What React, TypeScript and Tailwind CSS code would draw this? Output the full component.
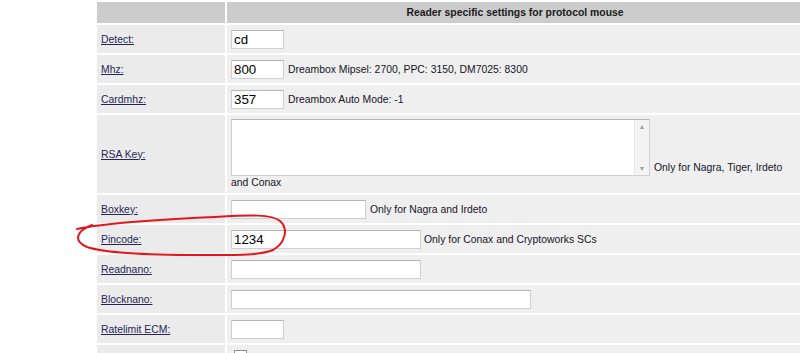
import React from 'react';

// Reader settings form (protocol mouse) with a hand-drawn red mark round Pincode

type RowProps = { label: string; children?: React.ReactNode; tall?: boolean };

function Row({ label, children, tall }: RowProps) {
  return (
    <tr className={tall ? 'h-[78px]' : 'h-[28px]'}>
      <td className="w-[128px] bg-[#ebebeb] pl-1 p-0 align-middle">
        <a href="#" className="text-[#252556] underline underline-offset-1">
          {label}
        </a>
      </td>
      <td className="bg-[#efefef] pl-1 p-0 align-middle">{children}</td>
    </tr>
  );
}

function Field({ width, value }: { width: string; value?: string }) {
  return (
    <input
      type="text"
      defaultValue={value}
      className={`${width} h-[19px] shrink-0 border border-[#cfcfcf] border-t-[#b4b4b4] bg-white px-[2px] text-[13.3px] text-black outline-none`}
    />
  );
}

function Hint({ children }: { children: React.ReactNode }) {
  return <span className="text-[#15151f]">{children}</span>;
}

export default function App() {
  return (
    <div className="relative h-[353px] w-[800px] overflow-hidden bg-white font-['Liberation_Sans',Arial,sans-serif] text-[10.4px] leading-[13px]">
      <table className="ml-[95px] w-[710px] border-separate border-spacing-[2px]">
        <tbody>
          <tr className="h-[21px]">
            <td className="w-[128px] bg-[#cccccc]" />
            <td className="bg-[#cccccc] text-center font-bold text-[#1a1a1a]">
              Reader specific settings for protocol mouse
            </td>
          </tr>
          <Row label="Detect:">
            <Field width="w-[53px]" value="cd" />
          </Row>
          <Row label="Mhz:">
            <div className="flex items-center gap-1">
              <Field width="w-[53px]" value="800" />
              <Hint>Dreambox Mipsel: 2700, PPC: 3150, DM7025: 8300</Hint>
            </div>
          </Row>
          <Row label="Cardmhz:">
            <div className="flex items-center gap-1">
              <Field width="w-[53px]" value="357" />
              <Hint>Dreambox Auto Mode: -1</Hint>
            </div>
          </Row>
          <Row label="RSA Key:" tall>
            <div className="flex items-end gap-1">
              <div className="flex h-[57px] w-[419px] border border-[#cfcfcf] border-t-[#b4b4b4] bg-white">
                <div className="flex-1" />
                <div className="flex w-[15px] flex-col items-center justify-between border-l border-[#e6e6e6] bg-[#f4f4f4] py-[3px] text-[7px] leading-none text-[#a3a3a3]">
                  <span>▲</span>
                  <span>▼</span>
                </div>
              </div>
              <span className="mb-[2px] text-[#15151f]">Only for Nagra, Tiger, Irdeto</span>
            </div>
            <div className="pb-[1px] text-[#15151f]">and Conax</div>
          </Row>
          <Row label="Boxkey:">
            <div className="flex items-center gap-1">
              <Field width="w-[135px]" />
              <Hint>Only for Nagra and Irdeto</Hint>
            </div>
          </Row>
          <Row label="Pincode:">
            <div className="flex items-center gap-[3px]">
              <Field width="w-[190px]" value="1234" />
              <Hint>Only for Conax and Cryptoworks SCs</Hint>
            </div>
          </Row>
          <Row label="Readnano:">
            <Field width="w-[190px]" />
          </Row>
          <Row label="Blocknano:">
            <Field width="w-[300px]" />
          </Row>
          <Row label="Ratelimit ECM:">
            <Field width="w-[53px]" />
          </Row>
          <tr className="h-[28px]">
            <td className="w-[128px] bg-[#ebebeb]" />
            <td className="bg-[#efefef] pl-[7px] align-top pt-[5px]">
              <div className="h-[13px] w-[13px] border border-[#8f8f8f] bg-white" />
            </td>
          </tr>
        </tbody>
      </table>

      <svg
        className="pointer-events-none absolute left-0 top-0"
        width="800"
        height="353"
        viewBox="0 0 800 353"
        fill="none"
      >
        <path
          d="M77 229 C 110 222, 170 219, 215 217 C 250 215, 272 214, 280 221 C 289 229, 285 243, 273 250 C 259 256, 230 255, 200 255 C 160 255, 108 254, 87 247 C 73 241, 76 231, 92 225"
          stroke="#e3161c"
          strokeWidth="2"
          strokeLinecap="round"
        />
      </svg>
    </div>
  );
}
